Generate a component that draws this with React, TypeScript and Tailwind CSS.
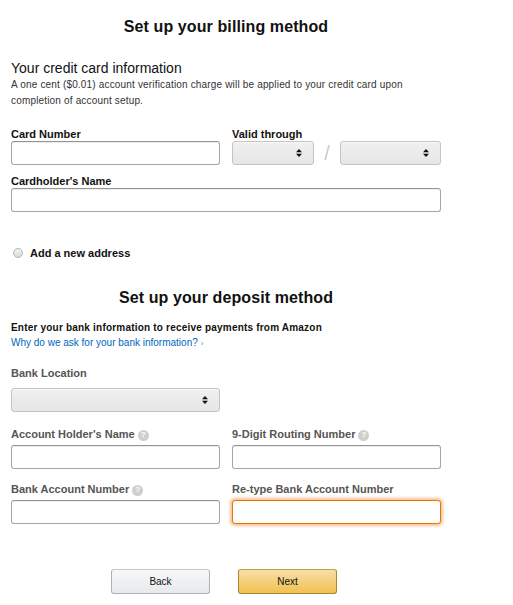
import React from "react";

const SelectBox = ({ className = "" }: { className?: string }) => (
  <div
    className={`relative h-[24px] rounded-[3px] border border-[#c4c4c4] bg-gradient-to-b from-[#f0f0f0] to-[#e6e6e6] shadow-[0_1px_0_rgba(255,255,255,0.6)_inset] ${className}`}
  >
    <svg
      className="absolute right-[11px] top-1/2 -translate-y-1/2"
      width="6"
      height="8"
      viewBox="0 0 6 8"
    >
      <path d="M0 3.2L3 0L6 3.2Z" fill="#111" />
      <path d="M0 4.8L3 8L6 4.8Z" fill="#111" />
    </svg>
  </div>
);

const TextBox = ({ focused = false }: { focused?: boolean }) =>
  focused ? (
    <div className="h-[24px] rounded-[3px] border border-[#e77600] bg-white shadow-[0_0_3px_2px_rgba(228,121,17,0.45)]" />
  ) : (
    <div className="h-[24px] rounded-[3px] border border-[#a6a6a6] border-t-[#949494] bg-white shadow-[0_1px_0_rgba(255,255,255,0.5),0_1px_0_rgba(0,0,0,0.07)_inset]" />
  );

const HelpIcon = () => (
  <span className="ml-[3px] inline-flex h-[11px] w-[11px] items-center justify-center rounded-full bg-[#cfcfcf] align-[1px] text-[8px] font-bold leading-none text-white">
    ?
  </span>
);

const Label = ({
  children,
  gray = false,
}: {
  children: React.ReactNode;
  gray?: boolean;
}) => (
  <div
    className={`h-[12px] whitespace-nowrap text-[11px] font-bold leading-[12px] ${
      gray ? "mb-[5px] text-[#555]" : "mb-[1px] text-[#111]"
    }`}
  >
    {children}
  </div>
);

export default function App() {
  return (
    <div className="min-h-[605px] w-[513px] bg-white font-['Liberation_Sans',Arial,sans-serif] text-[#111]">
      <div className="w-[452px] px-[11px]">
        <h1 className="pt-[17px] text-center text-[16px] font-bold leading-[20px] tracking-[0.1px]">
          Set up your billing method
        </h1>

        <h2 className="mt-[23px] text-[14px] leading-[17px]">
          Your credit card information
        </h2>
        <p className="text-[10px] leading-[16px] tracking-[0.17px] text-[#333]">
          A one cent ($0.01) account verification charge will be applied to your credit card upon
          <br />
          completion of account setup.
        </p>

        <div className="mt-[19px] grid grid-cols-2 gap-x-[12px]">
          <div>
            <Label>Card Number</Label>
            <TextBox />
          </div>
          <div>
            <Label>Valid through</Label>
            <div className="flex items-center">
              <SelectBox className="w-[82px]" />
              <span className="mx-auto text-[20px] font-light leading-none text-[#ccc]">
                /
              </span>
              <SelectBox className="w-[101px]" />
            </div>
          </div>
        </div>

        <div className="mt-[10px]">
          <Label>Cardholder&apos;s Name</Label>
          <TextBox />
        </div>

        <div className="mt-[34px] flex h-[14px] items-center">
          <span className="ml-[2px] h-[10px] w-[10px] rounded-full border border-[#b4b4b4] bg-gradient-to-b from-[#f2f2f2] to-[#d9d9d9]" />
          <span className="ml-[7px] text-[11px] font-bold leading-[14px]">
            Add a new address
          </span>
        </div>

        <h1 className="mt-[28px] text-center text-[16px] font-bold leading-[20px] tracking-[0.1px]">
          Set up your deposit method
        </h1>

        <div className="mt-[13px] text-[10px] font-bold leading-[14px] tracking-[0.2px]">
          Enter your bank information to receive payments from Amazon
        </div>
        <div className="mt-[1px] text-[10px] leading-[14px] text-[#0066c0]">
          Why do we ask for your bank information?
          <span className="ml-[3px] text-[8px] text-[#888]">›</span>
        </div>

        <div className="mt-[16px] w-[209px]">
          <div className="mb-[9px] h-[12px] text-[11px] font-bold leading-[12px] text-[#555]">
            Bank Location
          </div>
          <SelectBox />
        </div>

        <div className="mt-[16px] grid grid-cols-2 gap-x-[12px] gap-y-[14px]">
          <div>
            <Label gray>
              Account Holder&apos;s Name
              <HelpIcon />
            </Label>
            <TextBox />
          </div>
          <div>
            <Label gray>
              9-Digit Routing Number
              <HelpIcon />
            </Label>
            <TextBox />
          </div>
          <div>
            <Label gray>
              Bank Account Number
              <HelpIcon />
            </Label>
            <TextBox />
          </div>
          <div>
            <Label gray>Re-type Bank Account Number</Label>
            <TextBox focused />
          </div>
        </div>

        <div className="mt-[45px] flex gap-[28px] pl-[100px]">
          <button className="h-[25px] w-[99px] rounded-[3px] border border-[#adb1b8] border-t-[#c6c8cc] bg-gradient-to-b from-[#f7f8fa] to-[#e7e9ec] text-[10px] text-[#111]">
            Back
          </button>
          <button className="h-[25px] w-[99px] rounded-[3px] border border-[#a88734] border-t-[#c5a04b] bg-gradient-to-b from-[#f7dfa5] to-[#f0c14b] text-[10px] text-[#111]">
            Next
          </button>
        </div>
      </div>
    </div>
  );
}
